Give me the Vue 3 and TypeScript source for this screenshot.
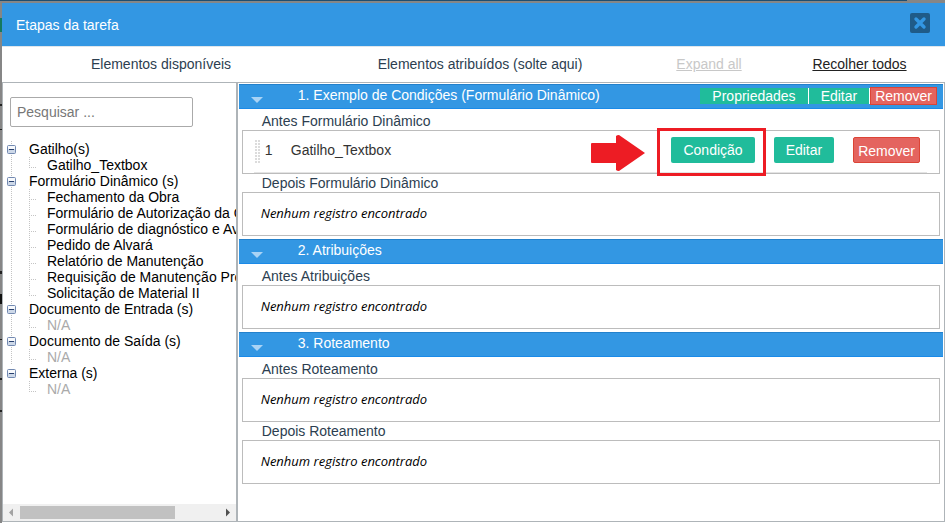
<script setup lang="ts">
import { ref } from 'vue'

interface TreeGroup {
  name: string
  items: string[]
}

interface Slot {
  label: string
  triggers: string[]
}

interface Step {
  title: string
  actions: boolean
  slots: Slot[]
}

const search = ref('')

const groups: TreeGroup[] = [
  { name: 'Gatilho(s)', items: ['Gatilho_Textbox'] },
  {
    name: 'Formulário Dinâmico (s)',
    items: [
      'Fechamento da Obra',
      'Formulário de Autorização da Obra',
      'Formulário de diagnóstico e Avaliação',
      'Pedido de Alvará',
      'Relatório de Manutenção',
      'Requisição de Manutenção Preventiva',
      'Solicitação de Material II',
    ],
  },
  { name: 'Documento de Entrada (s)', items: [] },
  { name: 'Documento de Saída (s)', items: [] },
  { name: 'Externa (s)', items: [] },
]

const steps: Step[] = [
  {
    title: '1. Exemplo de Condições (Formulário Dinâmico)',
    actions: true,
    slots: [
      { label: 'Antes Formulário Dinâmico', triggers: ['Gatilho_Textbox'] },
      { label: 'Depois Formulário Dinâmico', triggers: [] },
    ],
  },
  {
    title: '2. Atribuições',
    actions: false,
    slots: [{ label: 'Antes Atribuições', triggers: [] }],
  },
  {
    title: '3. Roteamento',
    actions: false,
    slots: [
      { label: 'Antes Roteamento', triggers: [] },
      { label: 'Depois Roteamento', triggers: [] },
    ],
  },
]
</script>

<template>
  <div class="backdrop">
    <main class="dialog">
      <header class="titlebar">
        <h1>Etapas da tarefa</h1>
        <button class="close" type="button" aria-label="Fechar">
          <svg viewBox="0 0 20 20" width="20" height="20">
            <path d="M6 6L14 14M14 6L6 14" stroke="#3397e3" stroke-width="3.4" stroke-linecap="round" />
          </svg>
        </button>
      </header>

      <div class="columns">
        <span>Elementos disponíveis</span>
        <span>Elementos atribuídos (solte aqui)</span>
        <a href="#" class="muted">Expand all</a>
        <a href="#">Recolher todos</a>
      </div>

      <div class="panes">
        <aside class="available">
          <div class="available-body">
            <input v-model="search" class="search" type="text" placeholder="Pesquisar ..." aria-label="Pesquisar" />
            <ul class="tree">
              <li v-for="group in groups" :key="group.name" class="group">
                <div class="group-name">
                  <button class="toggle" type="button" :aria-label="group.name">
                    <svg viewBox="0 0 9 9" width="9" height="9">
                      <rect x="0.5" y="0.5" width="8" height="8" rx="1" fill="#cdd8e8" stroke="#7289b0" />
                      <rect x="1" y="1" width="7" height="3" fill="#f7f9fc" />
                      <rect x="2" y="4" width="5" height="1" fill="#28406e" />
                    </svg>
                  </button>
                  <span>{{ group.name }}</span>
                </div>
                <ul class="items">
                  <li v-for="item in group.items" :key="item">{{ item }}</li>
                  <li v-if="!group.items.length" class="empty-item">N/A</li>
                </ul>
              </li>
            </ul>
          </div>
          <div class="scrollbar">
            <button type="button" aria-label="Rolar para a esquerda">
              <svg viewBox="0 0 17 17" width="17" height="17"><path d="M10 4.500V12.500L6 8.500Z" fill="#a3a3a3" /></svg>
            </button>
            <div class="track"><div class="thumb"></div></div>
            <button type="button" aria-label="Rolar para a direita">
              <svg viewBox="0 0 17 17" width="17" height="17"><path d="M7 4.500V12.500L11 8.500Z" fill="#505050" /></svg>
            </button>
          </div>
        </aside>

        <section class="assigned">
          <article v-for="step in steps" :key="step.title" class="step">
            <header class="step-head">
              <svg class="caret" viewBox="0 0 12 6" width="12" height="6"><path d="M0 0H12L6 6Z" fill="#a9d3f5" /></svg>
              <h2>{{ step.title }}</h2>
              <div v-if="step.actions" class="step-actions">
                <button type="button">Propriedades</button>
                <button type="button">Editar</button>
                <button type="button" class="danger">Remover</button>
              </div>
            </header>
            <div v-for="slot in step.slots" :key="slot.label" class="slot">
              <h3>{{ slot.label }}</h3>
              <div class="box">
                <div v-for="(trigger, i) in slot.triggers" :key="trigger" class="trigger">
                  <span class="grip"></span>
                  <span class="index">{{ i + 1 }}</span>
                  <span class="name">{{ trigger }}</span>
                  <div class="trigger-actions">
                    <div class="highlight">
                      <svg class="arrow" viewBox="0 0 54 36" width="54" height="36">
                        <path d="M0 9Q0 8 1 8H25V1Q26 0 28 0L54 18L28 36Q26 36 25 35V28H1Q0 28 0 27Z" fill="#ed1c24" />
                      </svg>
                      <span class="frame"></span>
                      <button type="button">Condição</button>
                    </div>
                    <button type="button">Editar</button>
                    <button type="button" class="danger">Remover</button>
                  </div>
                </div>
                <p v-if="!slot.triggers.length">Nenhum registro encontrado</p>
              </div>
            </div>
          </article>
        </section>
      </div>
    </main>
  </div>
</template>

<style>
body {
  background: #868686;
}
</style>

<style scoped>
.backdrop,
.backdrop * {
  box-sizing: border-box;
}

.backdrop {
  display: flex;
  min-height: 100vh;
  padding: 3px 0 0 2px;
  background:
    linear-gradient(90deg, #1f4e70 96%, transparent 96%) 0 0 / 100% 1px no-repeat,
    linear-gradient(#15795f, #15795f) 0 18px / 2px 14px no-repeat,
    linear-gradient(#222, #222) 0 104px / 2px 2px no-repeat,
    linear-gradient(#222, #222) 0 129px / 2px 1px no-repeat,
    linear-gradient(#222, #222) 0 271px / 2px 3px no-repeat,
    linear-gradient(#111, #111) 0 294px / 2px 10px no-repeat,
    linear-gradient(#222, #222) 0 339px / 2px 1px no-repeat,
    linear-gradient(#222, #222) 0 378px / 2px 2px no-repeat,
    linear-gradient(#222, #222) 0 410px / 2px 2px no-repeat,
    #868686;
  font-family: "Liberation Sans", Arial, sans-serif;
  font-size: 14px;
  line-height: 16px;
  color: #2c3e50;
}

.dialog {
  display: flex;
  flex: 1;
  flex-direction: column;
  min-width: 0;
  background: #fff;
}

h1,
h2,
h3,
p,
ul {
  margin: 0;
  padding: 0;
  font-size: inherit;
  font-weight: 400;
  list-style: none;
}

button {
  padding: 0;
  border: 0;
  background: none;
  font: inherit;
  color: #fff;
  white-space: nowrap;
}

svg {
  display: block;
}

.titlebar {
  display: flex;
  align-items: flex-start;
  justify-content: space-between;
  height: 43px;
  padding: 10px 15px 0 14px;
  background: #3397e3;
  color: #fff;
}

.titlebar h1 {
  padding-top: 4px;
}

.close {
  border-radius: 2px;
  background: #1f5b88;
}

.columns {
  display: grid;
  grid-template-columns: 318fr 320fr 138fr 163fr;
  align-items: center;
  height: 37px;
  padding: 0 4px 1px 0;
  border-top: 1px solid #dfe6ec;
  border-bottom: 1px solid #aeb4b8;
  text-align: center;
}

.columns a {
  color: #222;
}

.columns a.muted {
  color: #c8c8c8;
}

.panes {
  display: grid;
  flex: 1;
  grid-template-columns: 25% 1fr;
  margin-bottom: 1px;
  border-bottom: 1px solid #aeb4b8;
}

.available {
  display: flex;
  flex-direction: column;
  min-width: 0;
  border-right: 2px solid #aeb4b8;
  border-left: 1px solid #aeb4b8;
}

.available-body {
  flex: 1;
  overflow: hidden;
  padding: 14px 0 0 4px;
}

.search {
  display: block;
  width: 80%;
  height: 30px;
  margin-left: 3px;
  padding: 0 6px;
  border: 1px solid #aaa;
  border-radius: 2px;
  background: #fff;
  font: inherit;
}

.search::placeholder {
  color: #777;
  opacity: 1;
}

.tree {
  margin-top: 14px;
  color: #000;
  white-space: nowrap;
}

.group {
  background: repeating-linear-gradient(#c4c4c4 0 1px, transparent 1px 2px) 4px 0 / 1px 100% no-repeat;
}

.group:last-child {
  background: none;
}

.group-name {
  display: flex;
  align-items: center;
  gap: 13px;
}

.items {
  padding-left: 22px;
}

.items li {
  padding-left: 18px;
  background:
    repeating-linear-gradient(90deg, #c4c4c4 0 1px, transparent 1px 2px) 0 10px / 7px 1px no-repeat,
    repeating-linear-gradient(#c4c4c4 0 1px, transparent 1px 2px) 0 0 / 1px 100% no-repeat;
}

.items li:last-child {
  background:
    repeating-linear-gradient(90deg, #c4c4c4 0 1px, transparent 1px 2px) 0 10px / 7px 1px no-repeat,
    repeating-linear-gradient(#c4c4c4 0 1px, transparent 1px 2px) 0 0 / 1px 10px no-repeat;
}

.items .empty-item {
  color: #aaa;
}

.scrollbar {
  display: flex;
  align-items: center;
  height: 17px;
  background: #f0f0f0;
}

.track {
  flex: 1;
}

.thumb {
  width: 78%;
  height: 13px;
  background: #c1c1c1;
}

.assigned {
  min-width: 0;
  padding: 1px 1px 0 1px;
  border-right: 1px solid #aeb4b8;
}

.step {
  padding-bottom: 3px;
}

.step-head {
  display: flex;
  align-items: center;
  height: 25px;
  padding: 0 6px 0 12px;
  border-top: 1px solid #2381cc;
  border-bottom: 1px solid #1a8ae8;
  background: #3397e3;
  color: #fff;
}

.step-head h2 {
  flex: 1;
  padding: 0 0 3px 35px;
}

.caret {
  align-self: flex-end;
  margin-bottom: 5px;
}

.step-actions {
  display: flex;
  align-items: center;
  padding-bottom: 2px;
}

.step-actions button {
  height: 16px;
  padding: 0 12px;
  border-right: 1px solid #fff;
  background: #20bc9b;
}

.step-actions .danger {
  height: 18px;
  padding: 0 4px;
}

.step-actions .danger,
.trigger-actions .danger {
  border: 1px solid #dc4436;
  background: #e4645f;
}

.slot {
  padding: 0 3px;
}

.slot h3 {
  height: 18px;
  padding: 1px 0 0 20px;
}

.step-head + .slot h3 {
  height: 21px;
  padding-top: 4px;
}

.box {
  height: 44px;
  border: 1px solid #bcbcbc;
}

.box p {
  padding: 11px 18px;
  font: italic 13px/18px "Open Sans", "Noto Sans", sans-serif;
  color: #000;
}

.trigger {
  display: flex;
  height: 42px;
  margin: 0 12px 0 11px;
  padding: 6px 7px 0 1px;
  border-bottom: 1px solid #e4e4e4;
  color: #333;
}

.grip {
  width: 5px;
  height: 23px;
  margin-top: 3px;
  background:
    linear-gradient(90deg, transparent 2px, #fff 2px 3px, transparent 3px),
    repeating-linear-gradient(#dcdcdc 0 2px, #fff 2px 3px);
}

.index {
  width: 31px;
  padding: 5px 0 0 5px;
}

.name {
  flex: 1;
  padding-top: 5px;
}

.trigger-actions {
  display: flex;
  align-items: flex-start;
  gap: 19px;
}

.trigger-actions button {
  height: 26px;
  padding: 0 12px;
  border-radius: 2px;
  background: #20bc9b;
}

.trigger-actions .danger {
  padding: 1px 4px 0;
}

.highlight {
  position: relative;
}

.frame {
  position: absolute;
  inset: -9px -11px -13px -14px;
  border: 3px solid #ed1c24;
  pointer-events: none;
}

.arrow {
  position: absolute;
  top: -2px;
  right: calc(100% + 26px);
}
</style>
